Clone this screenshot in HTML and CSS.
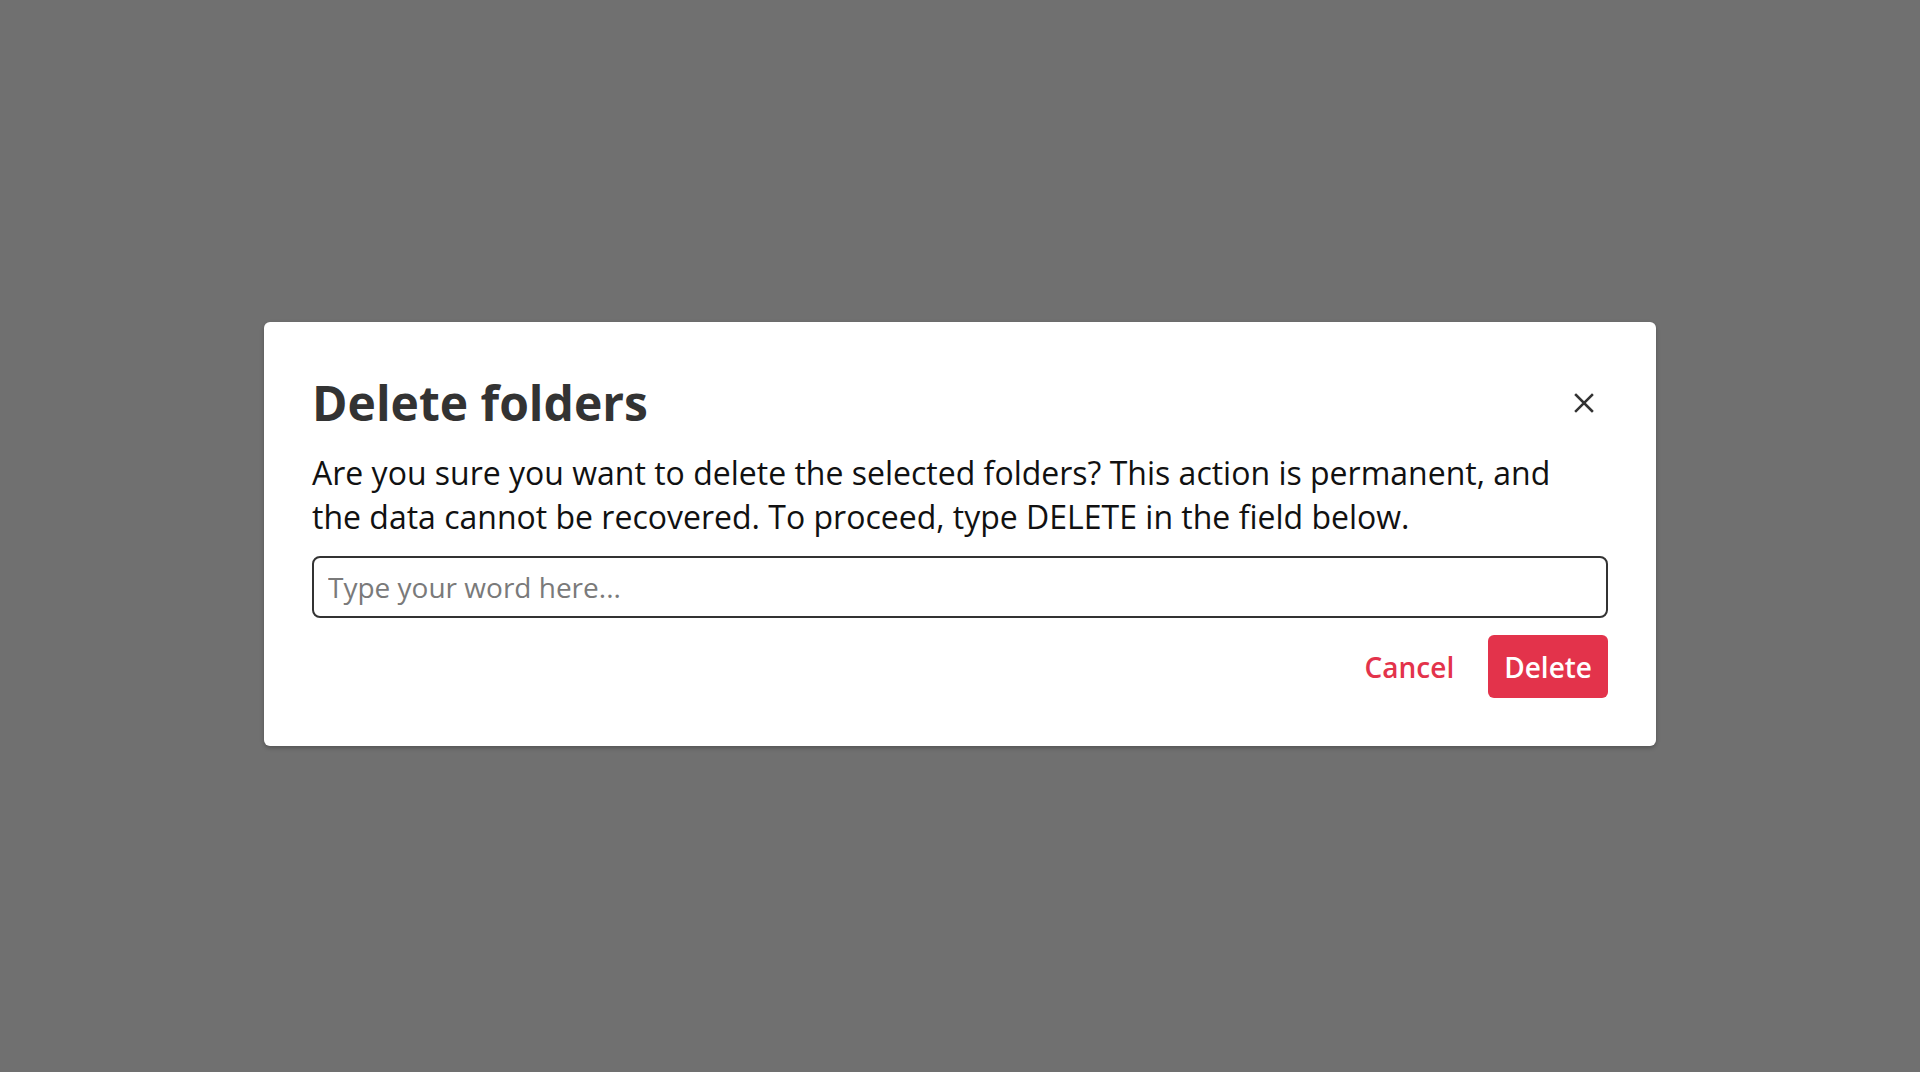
FILE: index.html
```html
<!DOCTYPE html>
<html lang="en">
<head>
<meta charset="utf-8">
<title>Delete folders</title>
<link rel="stylesheet" href="styles.css">
</head>
<body>
<div class="overlay">
  <div class="modal" role="dialog" aria-labelledby="modal-title">
    <div class="modal-header">
      <h1 class="modal-title" id="modal-title">Delete folders</h1>
      <button class="close-btn" aria-label="Close">
        <svg width="20" height="20" viewBox="0 0 20 20" aria-hidden="true">
          <path d="M2 2 L18 18 M18 2 L2 18" stroke="#333333" stroke-width="2.5" stroke-linecap="square" fill="none"/>
        </svg>
      </button>
    </div>
    <p class="modal-text">Are you sure you want to delete the selected folders? This action is permanent, and the data cannot be recovered. To proceed, type DELETE in the field below.</p>
    <input class="modal-input" type="text" placeholder="Type your word here...">
    <div class="modal-actions">
      <button class="btn btn-text">Cancel</button>
      <button class="btn btn-danger">Delete</button>
    </div>
  </div>
</div>
</body>
</html>
```

FILE: styles.css
```css
* { box-sizing: border-box; }
html, body {
  margin: 0;
  padding: 0;
  width: 100%;
  height: 100%;
}
body {
  background: #707070;
  font-family: "Open Sans", "Noto Sans", sans-serif;
  color: #111111;
}
.overlay {
  width: 100%;
  height: 100%;
  padding-bottom: 4px;
  display: flex;
  align-items: center;
  justify-content: center;
}
.modal {
  width: 1392px;
  background: #ffffff;
  border-radius: 6px;
  padding: 48px;
  box-shadow: 0 2px 4px rgba(0, 0, 0, 0.25);
  display: flex;
  flex-direction: column;
}
.modal-header {
  display: flex;
  justify-content: space-between;
  align-items: center;
}
.modal-title {
  margin: 0;
  font-size: 48px;
  font-weight: 700;
  line-height: normal;
  color: #333333;
}
.close-btn {
  background: none;
  border: none;
  padding: 0;
  margin-right: 14px;
  width: 20px;
  height: 20px;
  display: flex;
  align-items: center;
  justify-content: center;
  cursor: pointer;
}
.modal-text {
  margin: 16px 0 0;
  max-width: 1260px;
  font-size: 32px;
  line-height: 44px;
  color: #111111;
}
.modal-input {
  margin-top: 17px;
  height: 62px;
  width: 100%;
  border: 2px solid #333333;
  border-radius: 8px;
  padding: 0 14px;
  font-family: "Open Sans", "Noto Sans", sans-serif;
  font-size: 28px;
  color: #111111;
  outline: none;
}
.modal-input::placeholder {
  color: #7a7a7a;
}
.modal-actions {
  margin-top: 17px;
  display: flex;
  justify-content: flex-end;
  gap: 18px;
}
.btn {
  height: 63px;
  padding: 0 16px;
  border: none;
  border-radius: 6px;
  font-family: "Open Sans", "Noto Sans", sans-serif;
  font-size: 28px;
  font-weight: 600;
  cursor: pointer;
}
.btn-text {
  background: transparent;
  color: #e3334b;
}
.btn-danger {
  background: #e3334b;
  color: #ffffff;
}
```
